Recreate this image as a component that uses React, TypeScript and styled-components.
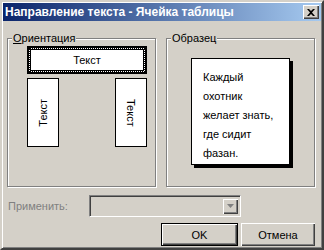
import styled, { createGlobalStyle } from "styled-components";

const GlobalStyle = createGlobalStyle`
  html, body {
    margin: 0;
    padding: 0;
    background: #d4d0c8;
  }
  body {
    font-family: "Liberation Sans", Arial, sans-serif;
    font-size: 11px;
    color: #000;
  }
`;

const Window = styled.div`
  box-sizing: border-box;
  width: 324px;
  height: 250px;
  padding: 1px;
  background: #d4d0c8;
  border: 2px solid;
  border-color: #d4d0c8 #404040 #404040 #d4d0c8;
  box-shadow: inset 1px 1px #fff, inset -1px -1px #808080;
  display: flex;
  flex-direction: column;
`;

const TitleBar = styled.div`
  height: 18px;
  flex-shrink: 0;
  display: flex;
  align-items: center;
  padding: 0 2px 0 2px;
  background: linear-gradient(to right, #0a246a, #a6caf0);
  color: #fff;
  font-weight: bold;
  font-size: 12px;
`;

const Title = styled.div`
  flex: 1;
  white-space: nowrap;
`;

const CloseButton = styled.div`
  box-sizing: border-box;
  width: 16px;
  height: 14px;
  background: #d4d0c8;
  box-shadow: inset 1px 1px #fff, inset -1px -1px #404040, inset -2px -2px #808080;
  display: flex;
  align-items: center;
  justify-content: center;
`;

const Body = styled.div`
  flex: 1;
  display: flex;
  flex-direction: column;
  padding: 17px 5px 0 4px;
`;

const Groups = styled.div`
  display: flex;
  gap: 10px;
`;

const GroupBox = styled.div`
  position: relative;
  box-sizing: border-box;
  width: 149px;
  height: 149px;
  border: 1px solid #808080;
  box-shadow: inset 1px 1px #fff, 1px 1px #fff;
`;

const Legend = styled.div`
  position: absolute;
  top: -7px;
  left: 4px;
  padding: 0 1px;
  background: #d4d0c8;
  line-height: 13px;

  u {
    text-decoration: underline;
  }
`;

const OrientationArea = styled.div`
  width: 120px;
  margin: 7px 0 0 19px;
  display: flex;
  flex-direction: column;
  gap: 4px;
`;

const HorizontalChoice = styled.div`
  box-sizing: border-box;
  height: 28px;
  border: 2px solid #000;
  background: #fff;
`;

const FocusRing = styled.div`
  box-sizing: border-box;
  height: 100%;
  border: 1px dotted #000;
`;

const ChoiceInner = styled.div`
  box-sizing: border-box;
  height: 100%;
  border: 1px solid #000;
  display: flex;
  align-items: center;
  justify-content: center;
`;

const VerticalRow = styled.div`
  display: flex;
  justify-content: space-between;
`;

const VerticalChoice = styled.div<{ $up?: boolean }>`
  box-sizing: border-box;
  width: 32px;
  height: 69px;
  border: 1px solid #000;
  background: #fff;
  display: flex;
  align-items: center;
  justify-content: center;

  span {
    writing-mode: vertical-rl;
    transform: ${({ $up }) => ($up ? "rotate(180deg)" : "none")};
  }
`;

const SampleArea = styled.div`
  display: flex;
  justify-content: center;
  padding-top: 19px;
`;

const SampleCard = styled.div`
  box-sizing: border-box;
  width: 99px;
  height: 107px;
  border: 1px solid #000;
  background: #fff;
  box-shadow: 3px 3px 0 #000;
  padding: 9px 0 0 11px;
  line-height: 19px;
`;

const ApplyRow = styled.div`
  display: flex;
  align-items: center;
  margin-top: 8px;
  padding-left: 1px;
`;

const ApplyLabel = styled.div`
  width: 81px;
  color: #808080;
`;

const Combo = styled.div`
  box-sizing: border-box;
  width: 152px;
  height: 22px;
  border: 1px solid;
  border-color: #808080 #fff #fff #808080;
  box-shadow: inset 1px 1px #404040, inset -1px -1px #d4d0c8;
  background: #d4d0c8;
  display: flex;
  justify-content: flex-end;
  padding: 2px;
`;

const ComboArrow = styled.div`
  box-sizing: border-box;
  width: 16px;
  height: 16px;
  box-shadow: inset 1px 1px #d4d0c8, inset 2px 2px #fff, inset -1px -1px #404040, inset -2px -2px #808080;
  display: flex;
  align-items: center;
  justify-content: center;
`;

const ButtonRow = styled.div`
  display: flex;
  justify-content: flex-end;
  gap: 3px;
  margin-top: 6px;
  padding-right: 1px;
`;

const Button = styled.div<{ $default?: boolean }>`
  box-sizing: border-box;
  width: ${({ $default }) => ($default ? "77px" : "74px")};
  height: 23px;
  border: ${({ $default }) => ($default ? "1px solid #000" : "none")};
  background: #d4d0c8;
  box-shadow: inset 1px 1px #fff, inset -1px -1px #404040, inset -2px -2px #808080;
  display: flex;
  align-items: center;
  justify-content: center;
`;

const App = () => {
  return (
    <>
      <GlobalStyle />
      <Window>
        <TitleBar>
          <Title>Направление текста - Ячейка таблицы</Title>
          <CloseButton>
            <svg width="8" height="7" viewBox="0 0 8 7">
              <path d="M0 0h2l2 2 2-2h2L5 3.5 8 7H6L4 5 2 7H0l3-3.5z" fill="#000" />
            </svg>
          </CloseButton>
        </TitleBar>
        <Body>
          <Groups>
            <GroupBox>
              <Legend><u>О</u>риентация</Legend>
              <OrientationArea>
                <HorizontalChoice>
                  <FocusRing>
                    <ChoiceInner>Текст</ChoiceInner>
                  </FocusRing>
                </HorizontalChoice>
                <VerticalRow>
                  <VerticalChoice $up><span>Текст</span></VerticalChoice>
                  <VerticalChoice><span>Текст</span></VerticalChoice>
                </VerticalRow>
              </OrientationArea>
            </GroupBox>
            <GroupBox>
              <Legend>Образец</Legend>
              <SampleArea>
                <SampleCard>
                  Каждый<br />
                  охотник<br />
                  желает знать,<br />
                  где сидит<br />
                  фазан.
                </SampleCard>
              </SampleArea>
            </GroupBox>
          </Groups>
          <ApplyRow>
            <ApplyLabel>Применить:</ApplyLabel>
            <Combo>
              <ComboArrow>
                <svg width="7" height="4" viewBox="0 0 7 4">
                  <path d="M0 0h7L3.5 4z" fill="#808080" />
                </svg>
              </ComboArrow>
            </Combo>
          </ApplyRow>
          <ButtonRow>
            <Button $default>OK</Button>
            <Button>Отмена</Button>
          </ButtonRow>
        </Body>
      </Window>
    </>
  );
};

export default App;
